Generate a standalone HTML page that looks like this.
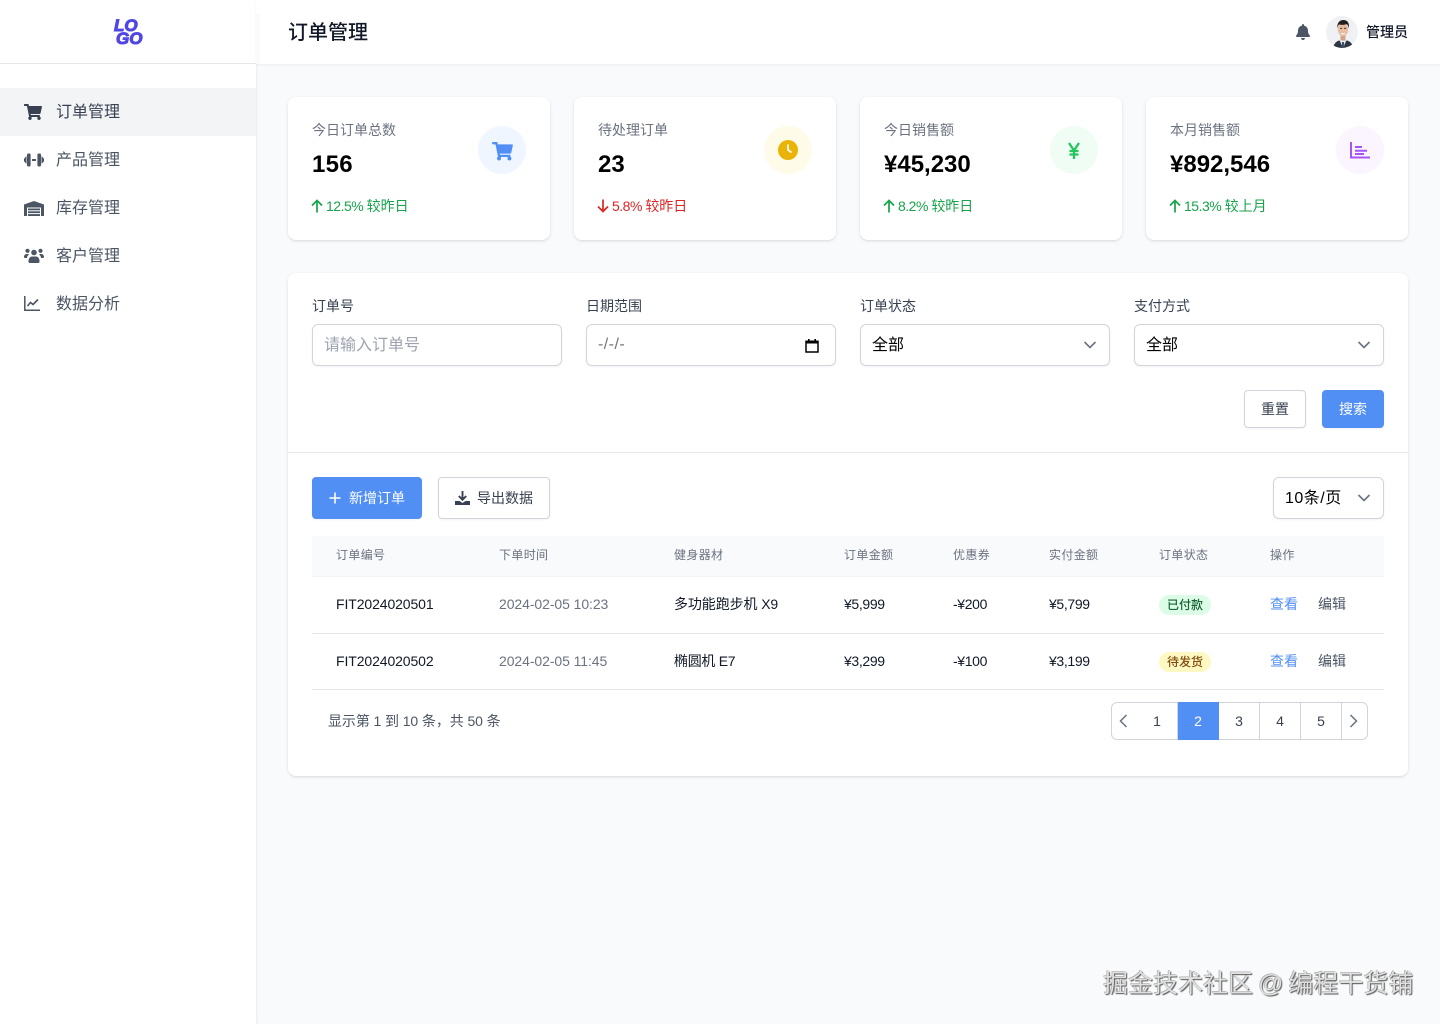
<!DOCTYPE html>
<html lang="zh-CN"><head><meta charset="utf-8"><title>订单管理</title>
<style>
*{box-sizing:border-box;margin:0;padding:0}
html,body{width:1440px;height:1024px;overflow:hidden;background:#f9fafb;font-family:"Liberation Sans","Noto Sans CJK SC",sans-serif;color:#000}
.t{position:absolute;white-space:nowrap;line-height:20px;font-size:14px}
.b{position:absolute}
svg{position:absolute;display:block}
.nav{font-size:16px;left:56px;color:#4b5563;line-height:24px}
.card{position:absolute;top:97px;width:262px;height:143px;background:#fff;border-radius:8px;box-shadow:0 1px 3px rgba(0,0,0,.1),0 1px 2px -1px rgba(0,0,0,.1)}
.circ{position:absolute;top:126px;width:48px;height:48px;border-radius:50%}
.lbl{color:#6b7280;top:120px}
.val{font-size:24px;font-weight:700;line-height:32px;top:149px}
.dl{top:196px}
.dl span{letter-spacing:-.5px}
.g{color:#16a34a}.r{color:#dc2626}
.fl{color:#374151;top:296px}
.ipt{position:absolute;top:324px;width:250px;height:42px;background:#fff;border:1px solid #d1d5db;border-radius:6px;box-shadow:0 1px 2px rgba(0,0,0,.05)}
.btn{position:absolute;border-radius:4px;border:1px solid #d1d5db;background:#fff;box-shadow:0 1px 2px rgba(0,0,0,.05)}
.pri{background:#528ff4;border-color:#528ff4}
.th{font-size:12px;color:#6b7280;top:545px;letter-spacing:.35px}
.td{color:#111827;letter-spacing:-.1px}
.m{letter-spacing:-.35px}
.gy{color:#6b7280;letter-spacing:-.08px}
.pg{position:absolute;top:702px;height:38px;background:#fff;border:1px solid #d1d5db;border-left:0;text-align:center;line-height:37px;font-size:14px;color:#374151}
.logo{font-size:17px;line-height:13px;font-weight:900;font-style:italic;color:#4f46e5;-webkit-text-stroke:1px #4f46e5}
</style></head><body>

<!-- sidebar -->
<div class="b" style="left:0;top:0;width:256px;height:1024px;background:#fff;box-shadow:0 1px 3px rgba(0,0,0,.1)"></div>
<div class="b" style="left:0;top:63px;width:256px;height:1px;background:#e5e7eb"></div>
<div class="b" style="left:256px;top:0;width:1184px;height:64px;background:#fff;box-shadow:0 1px 2px rgba(0,0,0,.05)"></div>
<div class="b" style="left:256px;top:14px;width:4px;height:50px;background:#f9fafb"></div>

<div class="t logo" style="left:114px;top:19px">LO</div>
<div class="t logo" style="left:116px;top:32px">GO</div>

<div class="b" style="left:0;top:88px;width:256px;height:48px;background:#f3f4f6"></div>
<svg style="left:24px;top:104px" width="18" height="16" viewBox="0 0 576 512"><path fill="#374151" d="M528.12 301.319l47.273-208C578.806 78.301 567.391 64 551.99 64H159.208l-9.166-44.81C147.758 8.021 137.93 0 126.529 0H24C10.745 0 0 10.745 0 24v16c0 13.255 10.745 24 24 24h69.883l70.248 343.435C147.325 417.1 136 435.222 136 456c0 30.928 25.072 56 56 56s56-25.072 56-56c0-15.674-6.447-29.835-16.824-40h209.647C430.447 426.165 424 440.326 424 456c0 30.928 25.072 56 56 56s56-25.072 56-56c0-22.172-12.888-41.332-31.579-50.405l5.517-24.276c3.413-15.018-8.002-29.319-23.403-29.319H218.117l-6.545-32h293.145c11.206 0 20.92-7.754 23.403-18.681z"/></svg>
<div class="t nav" style="top:101px;color:#374151">订单管理</div>
<svg style="left:24px;top:153px" width="20" height="14" viewBox="0 0 20 14"><g fill="#4b5563"><rect x="3" y="0.5" width="3.6" height="13" rx="1.2"/><rect x="13.4" y="0.5" width="3.6" height="13" rx="1.2"/><path d="M2.5 3v8L0 8.200V5.800z"/><path d="M17.500 3v8L20 8.200V5.800z"/><rect x="8" y="6" width="4" height="2"/></g></svg>
<div class="t nav" style="top:149px">产品管理</div>
<svg style="left:24px;top:201px" width="20" height="15" viewBox="0 0 20 15"><path fill="#4b5563" d="M10 0L0 3.500V15h3V6.500h14V15h3V3.500z"/><g fill="#4b5563"><rect x="4" y="7.500" width="12" height="1.800"/><rect x="4" y="10.300" width="12" height="1.800"/><rect x="4" y="13.100" width="12" height="1.900"/></g></svg>
<div class="t nav" style="top:197px">库存管理</div>
<svg style="left:24px;top:248px" width="20" height="15" viewBox="0 0 20 15"><g fill="#4b5563"><circle cx="3.500" cy="2.800" r="2.100"/><circle cx="16.500" cy="2.800" r="2.100"/><circle cx="10" cy="4.500" r="2.800"/><path d="M0 9c0-2 1.300-3 3-3 .9 0 1.600.3 2 .7C3.700 7.500 3 8.500 3 10H1c-.6 0-1-.4-1-1z"/><path d="M20 9c0-2-1.300-3-3-3-.9 0-1.600.3-2 .7 1.300.8 2 1.800 2 3.300h2c.6 0 1-.4 1-1z"/><path d="M4.500 13c0-2.800 1.800-4.500 3.500-4.500h4c1.700 0 3.500 1.700 3.500 4.500v.8c0 .7-.5 1.200-1.200 1.200H5.700c-.7 0-1.200-.5-1.200-1.200z"/></g></svg>
<div class="t nav" style="top:245px">客户管理</div>
<svg style="left:24px;top:296px" width="16" height="15" viewBox="0 0 16 15"><path fill="none" stroke="#4b5563" stroke-width="1.500" d="M.8 0v14.200H16"/><path fill="none" stroke="#4b5563" stroke-width="1.600" d="M3.500 10l3-3.500 2.500 2L14 3.500"/></svg>
<div class="t nav" style="top:293px">数据分析</div>

<!-- header -->
<div class="t" style="left:288px;top:19px;font-size:20px;line-height:28px;font-weight:500;color:#111827">订单管理</div>
<svg style="left:1296px;top:24px" width="14" height="16" viewBox="0 0 448 512"><path fill="#4b5563" d="M224 512c35.320 0 63.970-28.650 63.970-64H160.030c0 35.350 28.650 64 63.970 64zm215.390-149.710c-19.320-20.760-55.470-51.990-55.470-154.290 0-77.700-54.480-139.900-127.940-155.160V32c0-17.670-14.320-32-31.980-32s-31.980 14.330-31.980 32v20.840C118.560 68.100 64.080 130.300 64.080 208c0 102.300-36.150 133.530-55.470 154.290-6 6.450-8.660 14.160-8.610 21.710.11 16.400 12.980 32 32.100 32h383.800c19.120 0 32-15.600 32.100-32 .05-7.550-2.610-15.270-8.610-21.710z"/></svg>
<svg style="left:1326px;top:16px" width="32" height="32" viewBox="0 0 32 32"><defs><clipPath id="av"><circle cx="16" cy="16" r="16"/></clipPath></defs><g clip-path="url(#av)"><rect width="32" height="32" fill="#f0f1f4"/><path d="M7 33c.5-5 3-7.500 6-8.500l4 1.500 4-1.500c3.500 1 6 3.500 6.500 8.500z" fill="#2f3640"/><path d="M13.800 24.500L17 33l3.200-8.500-3.200-1.500z" fill="#e8edf2"/><path d="M16 26h2l.6 7h-3.200z" fill="#3a5068"/><rect x="14.500" y="18" width="5" height="6.500" fill="#d0a288"/><ellipse cx="17" cy="13.500" rx="5.200" ry="6.800" fill="#e8bda0"/><path d="M11.300 12.500c-.6-5 2-8.500 6-8.500 4.200 0 6.300 3 5.600 8.300-.5-2.300-1.300-3.700-2.300-4.200-2.300.9-5.500.9-7.600.4-.9 1-1.400 2.300-1.700 4z" fill="#24201f"/><path d="M14 12.300h2.200M18 12.300h2.200" stroke="#2a2422" stroke-width=".8"/><path d="M15 17.300c1.300.7 2.800.7 4 0" stroke="#fff" stroke-width=".9" fill="none"/></g></svg>
<div class="t" style="left:1366px;top:22px;font-weight:500;color:#111827">管理员</div>

<!-- stat cards -->
<div class="card" style="left:288px"></div>
<div class="card" style="left:574px"></div>
<div class="card" style="left:860px"></div>
<div class="card" style="left:1146px"></div>

<div class="t lbl" style="left:312px">今日订单总数</div>
<div class="t val" style="left:312px;letter-spacing:.3px">156</div>
<svg style="left:311px;top:199px" width="12" height="14" viewBox="0 0 12 14"><path d="M6 13.500V1.500M1 6.500l5-5 5 5" fill="none" stroke="#16a34a" stroke-width="1.700"/></svg>
<div class="t dl g" style="left:326px"><span>12.5% </span>较昨日</div>
<div class="circ" style="left:478px;background:#eff6ff"></div>
<svg style="left:492px;top:142px" width="21" height="18.500" viewBox="0 0 576 512"><path fill="#528ff4" d="M528.120 301.319l47.273-208C578.806 78.301 567.391 64 551.990 64H159.208l-9.166-44.810C147.758 8.021 137.930 0 126.529 0H24C10.745 0 0 10.745 0 24v16c0 13.255 10.745 24 24 24h69.883l70.248 343.435C147.325 417.100 136 435.222 136 456c0 30.928 25.072 56 56 56s56-25.072 56-56c0-15.674-6.447-29.835-16.824-40h209.647C430.447 426.165 424 440.326 424 456c0 30.928 25.072 56 56 56s56-25.072 56-56c0-22.172-12.888-41.332-31.579-50.405l5.517-24.276c3.413-15.018-8.002-29.319-23.403-29.319H218.117l-6.545-32h293.145c11.206 0 20.920-7.754 23.403-18.681z"/></svg>

<div class="t lbl" style="left:598px">待处理订单</div>
<div class="t val" style="left:598px">23</div>
<svg style="left:597px;top:199px" width="12" height="14" viewBox="0 0 12 14"><path d="M6 .5V12.500M1 7.500l5 5 5-5" fill="none" stroke="#dc2626" stroke-width="1.700"/></svg>
<div class="t dl r" style="left:612px"><span>5.8% </span>较昨日</div>
<div class="circ" style="left:764px;background:#fefce8"></div>
<svg style="left:778px;top:140px" width="20" height="20" viewBox="0 0 20 20"><circle cx="10" cy="10" r="10" fill="#eab308"/><path d="M10 4.500V10l3.500 2.500" fill="none" stroke="#fff" stroke-width="1.700"/></svg>

<div class="t lbl" style="left:884px">今日销售额</div>
<div class="t val" style="left:884px">¥45,230</div>
<svg style="left:883px;top:199px" width="12" height="14" viewBox="0 0 12 14"><path d="M6 13.500V1.500M1 6.500l5-5 5 5" fill="none" stroke="#16a34a" stroke-width="1.700"/></svg>
<div class="t dl g" style="left:898px"><span>8.2% </span>较昨日</div>
<div class="circ" style="left:1050px;background:#f0fdf4"></div>
<svg style="left:1068px;top:142px" width="12" height="17" viewBox="0 0 12 17"><path d="M1 1l5 7.500L11 1M6 8v9M1.500 9h9M1.500 12.500h9" fill="none" stroke="#22c55e" stroke-width="2.300"/></svg>

<div class="t lbl" style="left:1170px">本月销售额</div>
<div class="t val" style="left:1170px">¥892,546</div>
<svg style="left:1169px;top:199px" width="12" height="14" viewBox="0 0 12 14"><path d="M6 13.500V1.500M1 6.500l5-5 5 5" fill="none" stroke="#16a34a" stroke-width="1.700"/></svg>
<div class="t dl g" style="left:1184px"><span>15.3% </span>较上月</div>
<div class="circ" style="left:1336px;background:#faf5ff"></div>
<svg style="left:1350px;top:142px" width="20" height="17" viewBox="0 0 20 17"><path d="M1 0v15.500h19M5 5h7M5 8.700h12M5 12h9" fill="none" stroke="#a855f7" stroke-width="2"/></svg>

<!-- main panel -->
<div class="b" style="left:288px;top:273px;width:1120px;height:503px;background:#fff;border-radius:8px;box-shadow:0 1px 3px rgba(0,0,0,.1),0 1px 2px -1px rgba(0,0,0,.1)"></div>

<div class="t fl" style="left:312px">订单号</div>
<div class="ipt" style="left:312px"></div>
<div class="t" style="left:324px;top:336px;font-size:16px;line-height:20px;color:#9ca3af">请输入订单号</div>

<div class="t fl" style="left:586px">日期范围</div>
<div class="ipt" style="left:586px"></div>
<div class="t" style="left:598px;top:335px;font-size:16px;color:#757575;letter-spacing:.45px">-/-/-</div>
<svg style="left:805px;top:338px" width="14" height="15" viewBox="0 0 14 15"><path d="M1 3.500h12v10.500H1z" fill="none" stroke="#000" stroke-width="1.500"/><path d="M.5 2.500h13v3H.5z" fill="#000"/><rect x="3" y="1" width="1.600" height="2"/><rect x="9.400" y="1" width="1.600" height="2"/></svg>

<div class="t fl" style="left:860px">订单状态</div>
<div class="ipt" style="left:860px"></div>
<div class="t" style="left:872px;top:336px;font-size:16px;line-height:20px">全部</div>
<svg style="left:1083px;top:340px" width="14" height="10" viewBox="0 0 14 10"><path d="M1.500 2l5.500 5.500L12.500 2" fill="none" stroke="#6b7280" stroke-width="1.600"/></svg>

<div class="t fl" style="left:1134px">支付方式</div>
<div class="ipt" style="left:1134px"></div>
<div class="t" style="left:1146px;top:336px;font-size:16px;line-height:20px">全部</div>
<svg style="left:1357px;top:340px" width="14" height="10" viewBox="0 0 14 10"><path d="M1.500 2l5.500 5.500L12.500 2" fill="none" stroke="#6b7280" stroke-width="1.600"/></svg>

<div class="btn" style="left:1244px;top:390px;width:62px;height:38px"></div>
<div class="t" style="left:1261px;top:399px;color:#374151">重置</div>
<div class="btn pri" style="left:1322px;top:390px;width:62px;height:38px"></div>
<div class="t" style="left:1339px;top:399px;color:#fff">搜索</div>

<div class="b" style="left:288px;top:452px;width:1120px;height:1px;background:#e5e7eb"></div>

<div class="btn pri" style="left:312px;top:477px;width:110px;height:42px"></div>
<svg style="left:329px;top:492px" width="12" height="12" viewBox="0 0 12 12"><path d="M6 .5v11M.5 6h11" stroke="#fff" stroke-width="1.600"/></svg>
<div class="t" style="left:349px;top:488px;color:#fff">新增订单</div>
<div class="btn" style="left:438px;top:477px;width:112px;height:42px"></div>
<svg style="left:455px;top:491px" width="15" height="14" viewBox="0 0 15 14"><path d="M7.500 0v7.500M3.800 5l3.700 3.800L11.200 5" fill="none" stroke="#374151" stroke-width="1.900"/><path d="M0 10h4.500l3 2 3-2H15v4H0z" fill="#374151"/></svg>
<div class="t" style="left:477px;top:488px;color:#374151">导出数据</div>
<div class="ipt" style="left:1273px;top:477px;width:111px"></div>
<div class="t" style="left:1285px;top:489px;font-size:16px;line-height:20px;letter-spacing:.5px">10条/页</div>
<svg style="left:1357px;top:493px" width="14" height="10" viewBox="0 0 14 10"><path d="M1.500 2l5.500 5.500L12.500 2" fill="none" stroke="#6b7280" stroke-width="1.600"/></svg>

<!-- table -->
<div class="b" style="left:312px;top:536px;width:1072px;height:41px;background:#f9fafb;border-bottom:1px solid #f3f4f6"></div>
<div class="t th" style="left:336px">订单编号</div>
<div class="t th" style="left:499px">下单时间</div>
<div class="t th" style="left:674px">健身器材</div>
<div class="t th" style="left:844px">订单金额</div>
<div class="t th" style="left:953px">优惠券</div>
<div class="t th" style="left:1049px">实付金额</div>
<div class="t th" style="left:1159px">订单状态</div>
<div class="t th" style="left:1270px">操作</div>

<div class="t td" style="left:336px;top:594px">FIT2024020501</div>
<div class="t gy" style="left:499px;top:594px">2024-02-05 10:23</div>
<div class="t td" style="left:674px;top:594px">多功能跑步机 X9</div>
<div class="t td m" style="left:844px;top:594px">¥5,999</div>
<div class="t td m" style="left:953px;top:594px">-¥200</div>
<div class="t td m" style="left:1049px;top:594px">¥5,799</div>
<div class="t" style="left:1159px;top:594.500px;width:52px;height:20px;border-radius:10px;background:#dcfce7;color:#166534;font-size:12px;text-align:center;font-weight:500">已付款</div>
<div class="t" style="left:1270px;top:594px;color:#528ff4">查看</div>
<div class="t" style="left:1318px;top:594px;color:#4b5563">编辑</div>
<div class="b" style="left:312px;top:633px;width:1072px;height:1px;background:#e5e7eb"></div>

<div class="t td" style="left:336px;top:651px">FIT2024020502</div>
<div class="t gy" style="left:499px;top:651px">2024-02-05 11:45</div>
<div class="t td" style="left:674px;top:651px;letter-spacing:-.3px">椭圆机 E7</div>
<div class="t td m" style="left:844px;top:651px">¥3,299</div>
<div class="t td m" style="left:953px;top:651px">-¥100</div>
<div class="t td m" style="left:1049px;top:651px">¥3,199</div>
<div class="t" style="left:1159px;top:651.500px;width:52px;height:20px;border-radius:10px;background:#fef9c3;color:#854d0e;font-size:12px;text-align:center;font-weight:500">待发货</div>
<div class="t" style="left:1270px;top:651px;color:#528ff4">查看</div>
<div class="t" style="left:1318px;top:651px;color:#4b5563">编辑</div>
<div class="b" style="left:312px;top:689px;width:1072px;height:1px;background:#e5e7eb"></div>

<div class="t" style="left:328px;top:711px;color:#4b5563;letter-spacing:-.09px">显示第 1 到 10 条，共 50 条</div>

<div class="pg" style="left:1111px;width:27px;border-left:1px solid #d1d5db;border-radius:6px 0 0 6px"></div>
<svg style="left:1118px;top:714px" width="11" height="14" viewBox="0 0 11 14"><path d="M8.500 1L2.500 7l6 6" fill="none" stroke="#6b7280" stroke-width="1.500"/></svg>
<div class="pg" style="left:1137px;width:41px">1</div>
<div class="pg" style="left:1178px;width:41px;background:#528ff4;border-color:#528ff4;color:#fff">2</div>
<div class="pg" style="left:1219px;width:41px">3</div>
<div class="pg" style="left:1260px;width:41px">4</div>
<div class="pg" style="left:1301px;width:41px">5</div>
<div class="pg" style="left:1342px;width:26px;border-radius:0 6px 6px 0"></div>
<svg style="left:1348px;top:714px" width="11" height="14" viewBox="0 0 11 14"><path d="M2.500 1l6 6-6 6" fill="none" stroke="#6b7280" stroke-width="1.500"/></svg>

<div class="t" style="left:1103px;top:966px;font-size:25px;line-height:36px;word-spacing:-2px;color:#e0e0e0;text-shadow:1px 1px 1px #555,-.5px -.5px 0 #999">掘金技术社区 @ 编程干货铺</div>
</body></html>
